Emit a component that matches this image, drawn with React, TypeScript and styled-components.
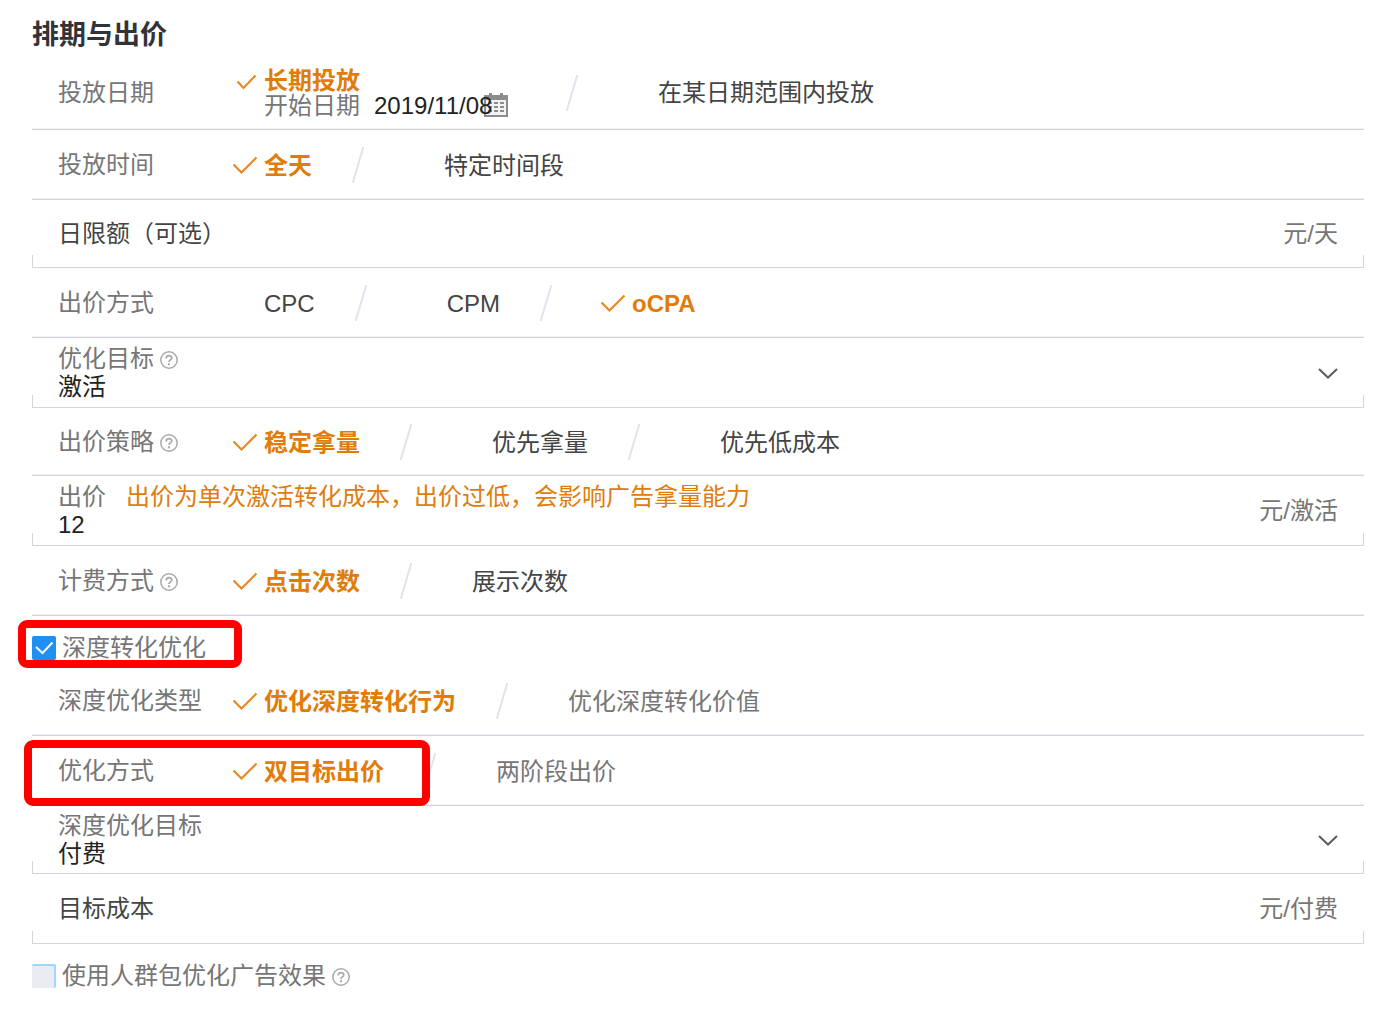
import React, { ReactNode } from "react";
import styled, { createGlobalStyle, css } from "styled-components";

const color = {
  title: "#323338",
  muted: "#767676",
  text: "#444444",
  value: "#222222",
  accent: "#e07c0a",
  line: "#d3d4dc",
  faint: "#e2e3ec",
  mark: "#ff0000",
};

const GlobalStyle = createGlobalStyle`
  *, *::before, *::after { box-sizing: border-box; }
  body {
    margin: 0;
    background: #fff;
    color: ${color.text};
    font: 24px/28px "Liberation Sans", "Noto Sans CJK SC", sans-serif;
  }
  input, select { font: inherit; color: inherit; }
`;

const Page = styled.form`
  padding: 18px 28px 20px 32px;
`;

const Title = styled.h2`
  margin: 0 0 4px;
  font-size: 27px;
  line-height: 34px;
  font-weight: 700;
  color: ${color.title};
`;

const Row = styled.div<{ $height: number }>`
  position: relative;
  display: flex;
  align-items: center;
  min-height: ${(p) => p.$height}px;
  padding: 0 26px;
  border-bottom: 1px solid ${color.line};
`;

const ChoiceRow = styled(Row).attrs({ role: "radiogroup" })`
  box-shadow: inset 0 -1px #f1f1f5;
`;

const RowLabel = styled.div`
  display: flex;
  align-items: center;
  gap: 6px;
  flex: 0 0 174px;
  color: ${color.muted};
  white-space: nowrap;
`;

const tick = css`linear-gradient(${color.line}, ${color.line})`;

/* A field row closes its line with a short upright at each end. */
const FieldRow = styled(Row)`
  background: ${tick} left bottom / 1px 12px no-repeat, ${tick} right bottom / 1px 12px no-repeat;
`;

const FieldBody = styled.div<{ $inline?: boolean }>`
  display: flex;
  flex: 1;
  min-width: 0;
  flex-direction: ${(p) => (p.$inline ? "row" : "column")};
`;

const FieldHead = styled.div`
  display: flex;
  align-items: center;
  gap: 6px;
  color: ${color.muted};
`;

const FieldLabel = styled.label`
  white-space: nowrap;
`;

const Hint = styled.span`
  margin-left: 14px;
  color: ${color.accent};
`;

const TextInput = styled.input`
  flex: 1;
  min-width: 0;
  height: 28px;
  padding: 0;
  border: 0;
  outline: 0;
  background: none;
  color: ${color.value};
`;

const Select = styled.select`
  height: 28px;
  padding: 0;
  border: 0;
  outline: 0;
  appearance: none;
  background: none;
  color: ${color.value};
`;

const Unit = styled.span`
  color: ${color.muted};
  white-space: nowrap;
`;

const Choice = styled.label<{ $narrow?: boolean; $muted?: boolean }>`
  position: relative;
  display: flex;
  align-items: center;
  color: ${(p) => (p.$muted ? color.muted : color.text)};
  white-space: nowrap;
  cursor: pointer;

  > svg {
    flex: none;
    width: ${(p) => (p.$narrow ? 12 : 32)}px;
    visibility: hidden;
  }
  > input:checked + svg {
    width: 32px;
    visibility: visible;
  }
  > input:checked ~ span {
    color: ${color.accent};
    font-weight: 700;
  }
`;

const HiddenRadio = styled.input.attrs({ type: "radio" })`
  position: absolute;
  margin: 0;
  opacity: 0;
`;

const ChoiceText = styled.span<{ $flush?: boolean }>`
  padding-top: ${(p) => (p.$flush ? 0 : 2)}px;
`;

const Slash = styled.svg`
  flex: none;
  margin: 0 48px 0 40px;
`;

const Stack = styled.div`
  display: flex;
  flex-direction: column;
  width: 294px;
  line-height: 25px;
`;

const DateLine = styled.div`
  position: relative;
  display: flex;
  align-items: center;
  gap: 14px;
  padding-left: 32px;
  color: ${color.muted};
`;

const DateInput = styled(TextInput)`
  position: relative;
  z-index: 1;
  height: 25px;
`;

const CalendarIcon = styled.svg`
  position: absolute;
  right: 18px;
  top: 0;
  pointer-events: none;
`;

const Toggle = styled.div`
  position: relative;
  display: flex;
  align-items: center;
  gap: 6px;
  padding: 20px 0 6px;
  line-height: 24px;
  color: ${color.muted};
`;

const CheckBox = styled.input.attrs({ type: "checkbox" })`
  appearance: none;
  width: 24px;
  height: 24px;
  margin: 0;
  border: solid #9cd8fb;
  border-width: 2px 2px 0 0;
  border-radius: 2px;
  background: #e9edf1;

  &:checked {
    border: 0;
    background: #1f90f3;
  }
`;

const ToggleBox = styled.span`
  display: grid;
  flex: none;

  > * { grid-area: 1 / 1; }
  > svg { pointer-events: none; visibility: hidden; }
  > input:checked + svg { visibility: visible; }
`;

/* Red frame drawn over the form to point out a setting. */
const Highlight = styled.div<{ $left: number; $width: number; $height: number }>`
  position: absolute;
  top: 4px;
  left: ${(p) => p.$left}px;
  width: ${(p) => p.$width}px;
  height: ${(p) => p.$height}px;
  border: 8px solid ${color.mark};
  border-radius: 9px;
  pointer-events: none;
`;

const Check = () => (
  <svg width="32" height="20" viewBox="0 0 32 20" fill="none" stroke="#e58a22" strokeWidth="2.2" aria-hidden="true">
    <path d="M1.5 9.5 L9.5 17.5 L24.5 2.5" />
  </svg>
);

const SmallCheck = () => (
  <svg width="32" height="20" viewBox="0 0 32 20" fill="none" stroke="#e58a22" strokeWidth="2.2" aria-hidden="true">
    <path d="M5.5 11.5 L11.5 18 L23.5 5.5" />
  </svg>
);

const HelpIcon = styled.svg`
  flex: none;
  margin-top: 2px;
`;

const Help = () => (
  <HelpIcon width="18" height="18" viewBox="0 0 18 18" fill="none" stroke="#a9a9ae" aria-hidden="true">
    <circle cx="9" cy="9" r="8.2" strokeWidth="1.5" />
    <path d="M6.2 7.4 C6.2 3.7 11.8 3.9 11.8 7 C11.8 9 9 8.8 9 11" strokeWidth="1.7" />
    <path d="M9 12.2 V14.2" strokeWidth="2" />
  </HelpIcon>
);

const Divider = () => (
  <Slash width="12" height="36" viewBox="0 0 12 36" aria-hidden="true">
    <path d="M11.4 0 L0.6 36" stroke={color.faint} strokeWidth="2" />
  </Slash>
);

const Chevron = () => (
  <svg width="20" height="12" viewBox="0 0 20 12" fill="none" stroke="#5c5c5c" strokeWidth="2" aria-hidden="true">
    <path d="M1 2 L10 10.5 L19 2" />
  </svg>
);

const Calendar = () => (
  <CalendarIcon width="24" height="24" viewBox="0 0 24 24" aria-hidden="true">
    <path d="M1 3 H23 V23 H1 Z" fill="#f3f3f3" stroke="#8c8c8c" strokeWidth="2" />
    <path d="M0 2 H24 V7 H0 Z M5 0 H8 V3 H5 Z M16 0 H19 V3 H16 Z" fill="#8c8c8c" />
    <path
      d="M4 10 H8 M10 10 H14 M16 10 H20 M4 14 H8 M10 14 H14 M16 14 H20 M4 18 H8 M10 18 H14 M16 18 H20"
      stroke="#8c8c8c"
      strokeWidth="2"
    />
  </CalendarIcon>
);

type Option = { text: string; narrow?: boolean; muted?: boolean };

const ChoiceGroup = (props: {
  label: string;
  name: string;
  options: Option[];
  selected?: number;
  height?: number;
  help?: boolean;
  children?: ReactNode;
}) => {
  const { label, name, options, selected = 0, height = 70, help, children } = props;
  return (
    <ChoiceRow $height={height} aria-label={label}>
      <RowLabel>
        {label}
        {help && <Help />}
      </RowLabel>
      {options.map((o, i) => (
        <React.Fragment key={o.text}>
          {i > 0 && <Divider />}
          <Choice $narrow={o.narrow} $muted={o.muted}>
            <HiddenRadio name={name} defaultChecked={i === selected} />
            <Check />
            <ChoiceText>{o.text}</ChoiceText>
          </Choice>
        </React.Fragment>
      ))}
      {children}
    </ChoiceRow>
  );
};

const SelectField = (props: { id: string; label: string; value: string; height: number; help?: boolean }) => (
  <FieldRow $height={props.height}>
    <FieldBody>
      <FieldHead>
        <FieldLabel htmlFor={props.id}>{props.label}</FieldLabel>
        {props.help && <Help />}
      </FieldHead>
      <Select id={props.id} defaultValue={props.value}>
        <option>{props.value}</option>
      </Select>
    </FieldBody>
    <Chevron />
  </FieldRow>
);

const AmountField = (props: { id: string; label: string; unit: string; height: number }) => (
  <FieldRow $height={props.height}>
    <FieldBody $inline>
      <FieldLabel htmlFor={props.id}>{props.label}</FieldLabel>
      <TextInput id={props.id} />
    </FieldBody>
    <Unit>{props.unit}</Unit>
  </FieldRow>
);

const ToggleCheck = (props: { id: string; checked?: boolean }) => (
  <ToggleBox>
    <CheckBox id={props.id} defaultChecked={props.checked} />
    <svg width="24" height="24" viewBox="0 0 24 24" fill="none" stroke="#fff" strokeWidth="2" aria-hidden="true">
      <path d="M4 11 L10.5 17 L20.5 6.5" />
    </svg>
  </ToggleBox>
);

export default function App() {
  return (
    <>
      <GlobalStyle />
      <Page>
        <Title>排期与出价</Title>

        <ChoiceRow $height={74} aria-label="投放日期">
          <RowLabel>投放日期</RowLabel>
          <Stack>
            <Choice>
              <HiddenRadio name="date" defaultChecked />
              <SmallCheck />
              <ChoiceText $flush>长期投放</ChoiceText>
            </Choice>
            <DateLine>
              <FieldLabel htmlFor="start">开始日期</FieldLabel>
              <DateInput id="start" defaultValue="2019/11/08" />
              <Calendar />
            </DateLine>
          </Stack>
          <Divider />
          <Choice>
            <HiddenRadio name="date" />
            <Check />
            <ChoiceText $flush>在某日期范围内投放</ChoiceText>
          </Choice>
        </ChoiceRow>

        <ChoiceGroup label="投放时间" name="time" options={[{ text: "全天" }, { text: "特定时间段" }]} />
        <AmountField id="limit" label="日限额（可选）" unit="元/天" height={68} />
        <ChoiceGroup
          label="出价方式"
          name="mode"
          selected={2}
          options={[{ text: "CPC" }, { text: "CPM" }, { text: "oCPA" }]}
        />
        <SelectField id="goal" label="优化目标" value="激活" height={70} help />
        <ChoiceGroup
          label="出价策略"
          name="strategy"
          height={68}
          help
          options={[{ text: "稳定拿量" }, { text: "优先拿量" }, { text: "优先低成本" }]}
        />
        <FieldRow $height={70}>
          <FieldBody>
            <FieldHead>
              <FieldLabel htmlFor="bid">出价</FieldLabel>
              <Hint>出价为单次激活转化成本，出价过低，会影响广告拿量能力</Hint>
            </FieldHead>
            <TextInput id="bid" defaultValue="12" />
          </FieldBody>
          <Unit>元/激活</Unit>
        </FieldRow>
        <ChoiceGroup
          label="计费方式"
          name="billing"
          help
          options={[{ text: "点击次数" }, { text: "展示次数", narrow: true }]}
        />

        <Toggle>
          <ToggleCheck id="deep" checked />
          <label htmlFor="deep">深度转化优化</label>
          <Highlight $left={-14} $width={224} $height={48} />
        </Toggle>

        <ChoiceGroup
          label="深度优化类型"
          name="deep-type"
          options={[{ text: "优化深度转化行为" }, { text: "优化深度转化价值", narrow: true, muted: true }]}
        />
        <ChoiceGroup
          label="优化方式"
          name="deep-mode"
          options={[{ text: "双目标出价" }, { text: "两阶段出价", narrow: true, muted: true }]}
        >
          <Highlight $left={-8} $width={406} $height={66} />
        </ChoiceGroup>
        <SelectField id="deep-goal" label="深度优化目标" value="付费" height={68} />
        <AmountField id="cost" label="目标成本" unit="元/付费" height={70} />

        <Toggle>
          <ToggleCheck id="crowd" />
          <label htmlFor="crowd">使用人群包优化广告效果</label>
          <Help />
        </Toggle>
      </Page>
    </>
  );
}
